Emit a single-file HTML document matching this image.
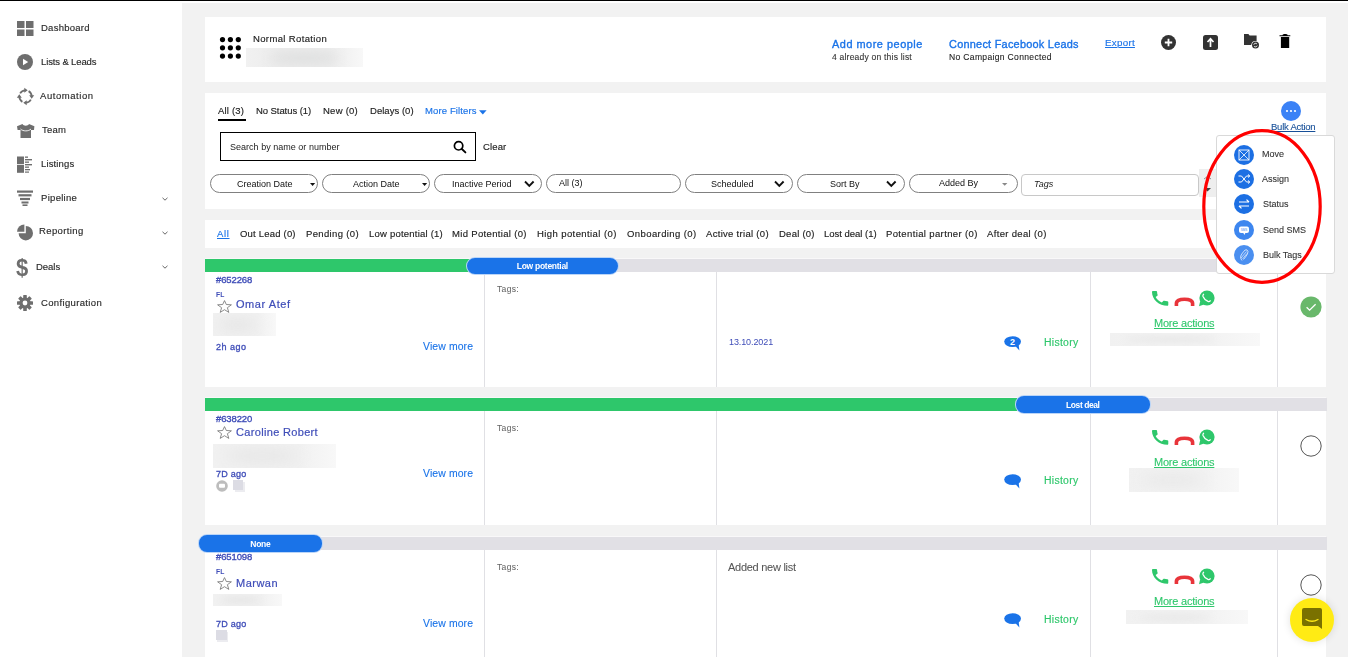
<!DOCTYPE html>
<html><head><meta charset="utf-8">
<style>
*{margin:0;padding:0;box-sizing:border-box}
html,body{width:1348px;height:657px;overflow:hidden;background:#fff;font-family:"Liberation Sans",sans-serif;color:#333}
.a{position:absolute}
.t{position:absolute;line-height:1;white-space:nowrap;will-change:transform}
.ic{position:absolute;overflow:visible}
.pill{position:absolute;top:174px;height:19px;border:1px solid #808080;border-radius:9.5px}
</style></head>
<body>

<div class="a" style="left:0px;top:0px;width:1348px;height:1px;background:#000;"></div>
<div class="a" style="left:182px;top:3px;width:1166px;height:654px;background:#f2f2f2;"></div>
<svg class="ic" style="left:17px;top:20px" width="17" height="17" viewBox="0 0 17 17"><g fill="#6e6e6e"><rect x="0" y="1" width="7.5" height="7"/><rect x="9" y="1" width="7.5" height="7"/><rect x="0" y="9.5" width="7.5" height="6.5"/><rect x="9" y="9.5" width="7.5" height="6.5"/></g></svg>
<div class="t" style="left:41.00px;top:23.00px;font-size:9.5px;color:#2a2a2a;letter-spacing:0.25px;-webkit-text-stroke:0.15px #2a2a2a;">Dashboard</div>
<svg class="ic" style="left:17px;top:54px" width="16" height="16" viewBox="0 0 16 16"><circle cx="8" cy="8" r="8" fill="#6e6e6e"/><path d="M6 4.8 L11.2 8 L6 11.2Z" fill="#fff"/></svg>
<div class="t" style="left:41.00px;top:57.00px;font-size:9.5px;color:#2a2a2a;letter-spacing:-0.13px;-webkit-text-stroke:0.15px #2a2a2a;">Lists &amp; Leads</div>
<svg class="ic" style="left:16.8px;top:87.8px" width="17" height="17" viewBox="0 0 17 17"><g fill="none" stroke="#6e6e6e" stroke-width="1.8"><path d="M3.13 5.40A6.2 6.2 0 0 1 8.18 2.31M11.60 3.13A6.2 6.2 0 0 1 14.69 8.18M13.87 11.60A6.2 6.2 0 0 1 8.82 14.69M5.40 13.87A6.2 6.2 0 0 1 2.31 8.82"/></g><path d="M10.70 2.30L7.30 -0.20L7.30 4.80ZM14.70 10.70L17.20 7.30L12.20 7.30ZM6.30 14.70L9.70 17.20L9.70 12.20ZM2.30 6.30L-0.20 9.70L4.80 9.70Z" fill="#6e6e6e"/></svg>
<div class="t" style="left:40.00px;top:91.00px;font-size:9.5px;color:#2a2a2a;letter-spacing:0.56px;-webkit-text-stroke:0.15px #2a2a2a;">Automation</div>
<svg class="ic" style="left:17px;top:124px" width="18" height="15" viewBox="0 0 18 15"><path d="M5.5 0 L0 2.2 L0.6 6 L3.5 6 L3.5 14 L14 14 L14 6 L17 6 L17.4 2.2 L12 0 C11 2.2 6.5 2.2 5.5 0Z" fill="#6e6e6e"/><path d="M3.5 5 C6 7.5 11.5 7.5 14 5" stroke="#fff" stroke-width="0.9" fill="none"/></svg>
<div class="t" style="left:42.30px;top:125.00px;font-size:9.5px;color:#2a2a2a;letter-spacing:0.19px;-webkit-text-stroke:0.15px #2a2a2a;">Team</div>
<svg class="ic" style="left:17px;top:156px" width="17" height="17" viewBox="0 0 17 17"><g fill="#6e6e6e"><rect x="0" y="0.5" width="7" height="7.5"/><rect x="0" y="8.8" width="7" height="8"/><rect x="8" y="0.5" width="3" height="1.3"/><rect x="8" y="3" width="7" height="1.4"/><rect x="8" y="5.5" width="4" height="1.3"/><rect x="8" y="8" width="7" height="1.4"/><rect x="8" y="10.5" width="4" height="1.3"/><rect x="8" y="13" width="5" height="1.3"/><rect x="8" y="15.5" width="4" height="1.2"/></g></svg>
<div class="t" style="left:41.00px;top:159.00px;font-size:9.5px;color:#2a2a2a;letter-spacing:0.14px;-webkit-text-stroke:0.15px #2a2a2a;">Listings</div>
<svg class="ic" style="left:17px;top:190px" width="16" height="16" viewBox="0 0 16 16"><g fill="#6e6e6e"><rect x="0" y="0.5" width="16" height="2.2"/><rect x="1.5" y="4.2" width="13" height="2.2"/><rect x="3" y="7.9" width="10" height="2.2"/><rect x="4.5" y="11.5" width="7" height="2"/><rect x="5.5" y="14.4" width="5" height="1.6"/></g></svg>
<div class="t" style="left:41.00px;top:193.00px;font-size:9.5px;color:#2a2a2a;letter-spacing:0.30px;-webkit-text-stroke:0.15px #2a2a2a;">Pipeline</div>
<svg class="ic" style="left:162px;top:197px" width="6" height="4" viewBox="0 0 6 4"><path d="M0.5 0.8 L3 3.2 L5.5 0.8" fill="none" stroke="#555" stroke-width="0.9"/></svg>
<svg class="ic" style="left:17px;top:224px" width="17" height="17" viewBox="0 0 17 17"><path d="M8.8 9.2 L8.8 2 A7.2 7.2 0 1 1 1.6 9.2 Z" fill="#6e6e6e"/><path d="M7.4 7.7 L0.1 7.7 A7.3 7.3 0 0 1 7.4 0.4 Z" fill="#6e6e6e"/></svg>
<div class="t" style="left:38.80px;top:226.00px;font-size:9.5px;color:#2a2a2a;letter-spacing:0.39px;-webkit-text-stroke:0.15px #2a2a2a;">Reporting</div>
<svg class="ic" style="left:162px;top:231px" width="6" height="4" viewBox="0 0 6 4"><path d="M0.5 0.8 L3 3.2 L5.5 0.8" fill="none" stroke="#555" stroke-width="0.9"/></svg>
<div class="t" style="left:16.3px;top:255.5px;font-size:22px;font-weight:bold;color:#6e6e6e;line-height:22px;transform:scaleY(1.12);transform-origin:0 0">$</div>
<div class="t" style="left:36.00px;top:262.00px;font-size:9.5px;color:#2a2a2a;letter-spacing:-0.04px;-webkit-text-stroke:0.15px #2a2a2a;">Deals</div>
<svg class="ic" style="left:162px;top:265px" width="6" height="4" viewBox="0 0 6 4"><path d="M0.5 0.8 L3 3.2 L5.5 0.8" fill="none" stroke="#555" stroke-width="0.9"/></svg>
<svg class="ic" style="left:17px;top:295px" width="16" height="16" viewBox="0 0 16 16"><g fill="#6e6e6e" transform="translate(8 8)"><rect x="-1.8" y="-8" width="3.6" height="16" rx="0.6"/><rect x="-1.8" y="-8" width="3.6" height="16" rx="0.6" transform="rotate(45)"/><rect x="-1.8" y="-8" width="3.6" height="16" rx="0.6" transform="rotate(90)"/><rect x="-1.8" y="-8" width="3.6" height="16" rx="0.6" transform="rotate(135)"/><circle r="5.6"/></g><circle cx="8" cy="8" r="2.4" fill="#fff"/></svg>
<div class="t" style="left:41.00px;top:298.00px;font-size:9.5px;color:#2a2a2a;letter-spacing:0.35px;-webkit-text-stroke:0.15px #2a2a2a;">Configuration</div>
<div class="a" style="left:205px;top:17px;width:1121px;height:65px;background:#fff;"></div>
<svg class="ic" style="left:219px;top:36px" width="23" height="24" viewBox="0 0 23 24"><g fill="#000"><circle cx="3.5" cy="3.6" r="2.6"/><circle cx="11.4" cy="3.6" r="2.6"/><circle cx="19.3" cy="3.6" r="2.6"/><circle cx="3.5" cy="11.8" r="2.6"/><circle cx="11.4" cy="11.8" r="2.6"/><circle cx="19.3" cy="11.8" r="2.6"/><circle cx="3.5" cy="20.1" r="2.6"/><circle cx="11.4" cy="20.1" r="2.6"/><circle cx="19.3" cy="20.1" r="2.6"/></g></svg>
<div class="t" style="left:252.50px;top:34.00px;font-size:9.5px;color:#222;letter-spacing:0.36px;-webkit-text-stroke:0.15px #222;">Normal Rotation</div>
<div class="a" style="left:246px;top:48px;width:117px;height:19px;background:linear-gradient(90deg,#f1f1f1,#ececec 30%,#ececec 70%,#f8f8f8);overflow:hidden"><div class="a" style="left:23px;top:5px;width:70px;height:10px;background:#dcdddd;filter:blur(5.7px);border-radius:50%"></div></div>
<div class="t" style="left:832.00px;top:39.00px;font-size:10.92px;color:#1a73e8;letter-spacing:0.52px;-webkit-text-stroke:0.35px #1a73e8;">Add more people</div>
<div class="t" style="left:832.00px;top:53.00px;font-size:8.55px;color:#333;letter-spacing:0.20px;-webkit-text-stroke:0.1px #333;">4 already on this list</div>
<div class="t" style="left:949.40px;top:39.00px;font-size:10.92px;color:#1a73e8;letter-spacing:0.25px;-webkit-text-stroke:0.35px #1a73e8;">Connect Facebook Leads</div>
<div class="t" style="left:949.40px;top:53.00px;font-size:8.55px;color:#222;letter-spacing:0.33px;-webkit-text-stroke:0.1px #222;">No Campaign Connected</div>
<div class="t" style="left:1105.20px;top:38.00px;font-size:9.79px;color:#1a73e8;letter-spacing:0.28px;-webkit-text-stroke:0.15px #1a73e8;text-decoration:underline;">Export</div>
<svg class="ic" style="left:1161px;top:35px" width="15" height="15" viewBox="0 0 15 15"><circle cx="7.5" cy="7.5" r="7.5" fill="#333"/><path d="M7.5 3.8V11.2M3.8 7.5H11.2" stroke="#fff" stroke-width="1.8"/></svg>
<svg class="ic" style="left:1203px;top:35px" width="15" height="15" viewBox="0 0 15 15"><rect x="0" y="0" width="15" height="15" rx="2.5" fill="#333"/><path d="M7.5 12V4.2M4.5 7L7.5 3.8L10.5 7" stroke="#fff" stroke-width="1.7" fill="none"/></svg>
<svg class="ic" style="left:1244px;top:34px" width="16" height="16" viewBox="0 0 16 16"><path d="M0 0H4.4L5.6 1.4H12.6V7.6A4.4 4.4 0 0 0 7.4 10.9H0Z" fill="#333"/><circle cx="11.5" cy="11.1" r="4.1" fill="#fff"/><circle cx="11.5" cy="11.1" r="3.5" fill="#333"/><path d="M9.8 10.6A1.8 1.8 0 0 1 13 10.1M13.2 11.6A1.8 1.8 0 0 1 10 12.1" stroke="#fff" stroke-width="0.9" fill="none"/></svg>
<svg class="ic" style="left:1279px;top:34px" width="12" height="15" viewBox="0 0 12 15"><path d="M3 1.9Q3.6 0 5.2 0H7Q8.6 0 9.2 1.9Z M0.5 1.3H11.3V2.3H0.5Z M1.9 3H10.2V14H1.9Z" fill="#000"/></svg>
<div class="a" style="left:205px;top:93px;width:1121px;height:116px;background:#fff;"></div>
<div class="t" style="left:218.00px;top:106.00px;font-size:9.5px;color:#222;letter-spacing:0.18px;-webkit-text-stroke:0.15px #222;">All (3)</div>
<div class="a" style="left:218px;top:119px;width:28px;height:2px;background:#000;"></div>
<div class="t" style="left:255.90px;top:106.00px;font-size:9.5px;color:#222;letter-spacing:-0.07px;-webkit-text-stroke:0.15px #222;">No Status (1)</div>
<div class="t" style="left:322.60px;top:106.00px;font-size:9.5px;color:#222;letter-spacing:0.25px;-webkit-text-stroke:0.15px #222;">New (0)</div>
<div class="t" style="left:369.90px;top:106.00px;font-size:9.5px;color:#222;letter-spacing:0.03px;-webkit-text-stroke:0.15px #222;">Delays (0)</div>
<div class="t" style="left:425.20px;top:106.00px;font-size:9.5px;color:#1a73e8;letter-spacing:0.12px;-webkit-text-stroke:0.15px #1a73e8;">More Filters</div>
<svg class="ic" style="left:479px;top:110px" width="8" height="5" viewBox="0 0 8 5"><path d="M0 0.2H7.6L3.8 4.4Z" fill="#1a73e8"/></svg>
<div class="a" style="left:220px;top:132px;width:256px;height:29px;border:1.2px solid #000"></div>
<div class="t" style="left:229.50px;top:143.00px;font-size:9.0px;color:#222;letter-spacing:0.02px;">Search by name or number</div>
<svg class="ic" style="left:453px;top:140px" width="14" height="14" viewBox="0 0 14 14"><circle cx="5.6" cy="5.8" r="4.2" fill="none" stroke="#000" stroke-width="1.7"/><path d="M8.6 8.8L12.4 12.4" stroke="#000" stroke-width="1.9" stroke-linecap="round"/></svg>
<div class="t" style="left:483.00px;top:142.00px;font-size:9.5px;color:#222;letter-spacing:0.14px;-webkit-text-stroke:0.15px #222;">Clear</div>
<div class="pill" style="left:210px;width:108px"></div>
<div class="t" style="left:236.60px;top:180.00px;font-size:9.0px;color:#111;">Creation Date</div>
<svg class="ic" style="left:310px;top:182.5px" width="6" height="4" viewBox="0 0 6 4"><path d="M0 0H5.2L2.6 3Z" fill="#111"/></svg>
<div class="pill" style="left:322px;width:108px"></div>
<div class="t" style="left:353.00px;top:180.00px;font-size:9.0px;color:#111;">Action Date</div>
<svg class="ic" style="left:422px;top:182.5px" width="6" height="4" viewBox="0 0 6 4"><path d="M0 0H5.2L2.6 3Z" fill="#111"/></svg>
<div class="pill" style="left:434px;width:108px"></div>
<div class="t" style="left:452.00px;top:180.00px;font-size:9.0px;color:#111;">Inactive Period</div>
<svg class="ic" style="left:524px;top:180px" width="11" height="8" viewBox="0 0 11 8"><path d="M1 1.5L5.3 5.8L9.6 1.5" fill="none" stroke="#111" stroke-width="1.9"/></svg>
<div class="pill" style="left:546px;width:134.5px"></div>
<div class="t" style="left:559.00px;top:179.00px;font-size:9.0px;color:#111;">All (3)</div>
<div class="pill" style="left:685px;width:107.5px"></div>
<div class="t" style="left:710.60px;top:180.00px;font-size:9.0px;color:#111;">Scheduled</div>
<svg class="ic" style="left:774px;top:180px" width="11" height="8" viewBox="0 0 11 8"><path d="M1 1.5L5.3 5.8L9.6 1.5" fill="none" stroke="#111" stroke-width="1.9"/></svg>
<div class="pill" style="left:797px;width:107.5px"></div>
<div class="t" style="left:829.50px;top:180.00px;font-size:9.0px;color:#111;">Sort By</div>
<svg class="ic" style="left:886px;top:180px" width="11" height="8" viewBox="0 0 11 8"><path d="M1 1.5L5.3 5.8L9.6 1.5" fill="none" stroke="#111" stroke-width="1.9"/></svg>
<div class="pill" style="left:909px;width:108.5px"></div>
<div class="t" style="left:939.20px;top:179.00px;font-size:9.0px;color:#111;">Added By</div>
<svg class="ic" style="left:1002px;top:183px" width="6" height="4" viewBox="0 0 6 4"><path d="M0 0H5.4L2.7 2.8Z" fill="#888"/></svg>
<div class="a" style="left:1021px;top:173.5px;width:178px;height:22px;border:1px solid #c8c8c8;border-radius:4px"></div>
<div class="t" style="left:1034.00px;top:180.00px;font-size:9.0px;color:#222;font-style:italic;">Tags</div>
<div class="a" style="left:1199px;top:169px;width:17px;height:28px;background:#eeeeee;"></div>
<svg class="ic" style="left:1203px;top:176px" width="9" height="17" viewBox="0 0 9 17"><path d="M1 3L4.5 0.5L8 3" fill="none" stroke="#777" stroke-width="0.8"/><path d="M1 12L8 12L4.5 15.5Z" fill="#444"/></svg>
<svg class="ic" style="left:1281px;top:101px" width="20" height="20" viewBox="0 0 20 20"><circle cx="10" cy="10" r="10" fill="#3b82f6"/><circle cx="6" cy="10" r="1.1" fill="#fff"/><circle cx="10" cy="10" r="1.1" fill="#fff"/><circle cx="14" cy="10" r="1.1" fill="#fff"/></svg>
<div class="t" style="left:1271.00px;top:122.00px;font-size:9.5px;color:#174f98;letter-spacing:-0.24px;-webkit-text-stroke:0.1px #174f98;text-decoration:underline;">Bulk Action</div>
<div class="a" style="left:205px;top:220px;width:1121px;height:28px;background:#fff;"></div>
<div class="t" style="left:217.00px;top:229.00px;font-size:9.5px;color:#1a73e8;letter-spacing:0.65px;-webkit-text-stroke:0.15px #1a73e8;text-decoration:underline;">All</div>
<div class="t" style="left:240.00px;top:229.00px;font-size:9.5px;color:#222;letter-spacing:0.20px;-webkit-text-stroke:0.15px #222;">Out Lead (0)</div>
<div class="t" style="left:306.00px;top:229.00px;font-size:9.5px;color:#222;letter-spacing:0.35px;-webkit-text-stroke:0.15px #222;">Pending (0)</div>
<div class="t" style="left:368.50px;top:229.00px;font-size:9.5px;color:#222;letter-spacing:0.22px;-webkit-text-stroke:0.15px #222;">Low potential (1)</div>
<div class="t" style="left:452.30px;top:229.00px;font-size:9.5px;color:#222;letter-spacing:0.33px;-webkit-text-stroke:0.15px #222;">Mid Potential (0)</div>
<div class="t" style="left:537.00px;top:229.00px;font-size:9.5px;color:#222;letter-spacing:0.41px;-webkit-text-stroke:0.15px #222;">High potential (0)</div>
<div class="t" style="left:626.60px;top:229.00px;font-size:9.5px;color:#222;letter-spacing:0.41px;-webkit-text-stroke:0.15px #222;">Onboarding (0)</div>
<div class="t" style="left:706.10px;top:229.00px;font-size:9.5px;color:#222;letter-spacing:0.30px;-webkit-text-stroke:0.15px #222;">Active trial (0)</div>
<div class="t" style="left:778.50px;top:229.00px;font-size:9.5px;color:#222;letter-spacing:0.25px;-webkit-text-stroke:0.15px #222;">Deal (0)</div>
<div class="t" style="left:824.00px;top:229.00px;font-size:9.5px;color:#222;letter-spacing:-0.02px;-webkit-text-stroke:0.15px #222;">Lost deal (1)</div>
<div class="t" style="left:886.00px;top:229.00px;font-size:9.5px;color:#222;letter-spacing:0.37px;-webkit-text-stroke:0.15px #222;">Potential partner (0)</div>
<div class="t" style="left:987.40px;top:229.00px;font-size:9.5px;color:#222;letter-spacing:0.34px;-webkit-text-stroke:0.15px #222;">After deal (0)</div>
<div class="a" style="left:205px;top:258px;width:1121px;height:1px;background:#f9f8f9;"></div>
<div class="a" style="left:205px;top:259px;width:1122px;height:13px;background:#e1e0e5;"></div>
<div class="a" style="left:205px;top:259px;width:272px;height:13px;background:#2ec76b;"></div>
<div class="a" style="left:205px;top:272px;width:1121px;height:115px;background:#fff;"></div>
<div class="a" style="left:484px;top:272px;width:1px;height:115px;background:#e0e0e4;"></div>
<div class="a" style="left:716px;top:272px;width:1px;height:115px;background:#e0e0e4;"></div>
<div class="a" style="left:1090px;top:272px;width:1px;height:115px;background:#e0e0e4;"></div>
<div class="a" style="left:1277px;top:272px;width:1px;height:115px;background:#e0e0e4;"></div>
<div class="a" style="left:466px;top:257px;width:153px;height:18px;border-radius:9px;background:#1a73e8;border:1px solid rgba(255,255,255,0.7)"></div>
<div class="t" style="left:467px;width:151px;text-align:center;top:262px;font-size:8.5px;font-weight:bold;color:#fff;letter-spacing:-0.28px;text-indent:-0.28px">Low potential</div>
<div class="t" style="left:215.80px;top:275.00px;font-size:9.5px;color:#3f4db8;letter-spacing:-0.11px;-webkit-text-stroke:0.35px #3f4db8;">#652268</div>
<div class="t" style="left:216.00px;top:292.00px;font-size:6.8px;color:#3f4db8;font-weight:bold;">FL</div>
<svg class="ic" style="left:216.8px;top:300px" width="15" height="13" viewBox="0 0 15 13"><path d="M7.5 0.6 L9.3 4.5 L14.4 4.8 L10.4 7.7 L11.8 12.4 L7.5 9.7 L3.2 12.4 L4.6 7.7 L0.6 4.8 L5.7 4.5Z" fill="none" stroke="#707070" stroke-width="0.8" stroke-linejoin="round"/></svg>
<div class="t" style="left:236.20px;top:299.00px;font-size:11px;color:#3f4db8;letter-spacing:0.56px;-webkit-text-stroke:0.2px #3f4db8;">Omar Atef</div>
<div class="a" style="left:213px;top:313px;width:63px;height:23px;background:linear-gradient(90deg,#f1f1f1,#f1f1f1 30%,#f1f1f1 70%,#f8f8f8);overflow:hidden"><div class="a" style="left:6px;top:6px;width:38px;height:12px;background:#e4e4e4;filter:blur(6.9px);border-radius:50%"></div></div>
<div class="t" style="left:216.00px;top:343.00px;font-size:9.03px;color:#3f4db8;letter-spacing:0.48px;-webkit-text-stroke:0.3px #3f4db8;">2h ago</div>
<div class="t" style="left:423.20px;top:342.00px;font-size:10.45px;color:#1a73e8;letter-spacing:0.11px;-webkit-text-stroke:0.1px #1a73e8;">View more</div>
<div class="t" style="left:496.50px;top:285.00px;font-size:8.55px;color:#666;letter-spacing:0.31px;-webkit-text-stroke:0.05px #666;">Tags:</div>
<div class="t" style="left:728.50px;top:338.00px;font-size:9.0px;color:#3f4db8;letter-spacing:-0.10px;">13.10.2021</div>
<svg class="ic" style="left:1003.5px;top:336px" width="18" height="15" viewBox="0 0 18 15"><ellipse cx="8.6" cy="5.6" rx="8.4" ry="5.4" fill="#1a73e8"/><path d="M10.5 9 L15.4 14.6 L14.6 8.4Z" fill="#1a73e8"/><text x="8.4" y="8.9" font-size="9" font-weight="bold" fill="#fff" text-anchor="middle" font-family="Liberation Sans">2</text></svg>
<div class="t" style="left:1044.40px;top:338.00px;font-size:10.45px;color:#2ec76b;letter-spacing:0.27px;-webkit-text-stroke:0.15px #2ec76b;">History</div>
<svg class="ic" style="left:1152px;top:290px" width="17" height="16" viewBox="0 0 17 16"><path transform="translate(-2.72 -1.35) scale(0.905 0.817)" d="M20.01 15.38c-1.23 0-2.42-.2-3.53-.56-.35-.12-.74-.03-1.01.24l-1.57 1.97c-2.83-1.35-5.48-3.9-6.89-6.83l1.95-1.66c.27-.28.35-.67.24-1.02-.37-1.11-.56-2.3-.56-3.53 0-.54-.45-.99-.99-.99H4.19C3.65 3 3 3.24 3 3.99 3 13.28 10.73 21 20.01 21c.71 0 .99-.63.99-1.18v-3.45c0-.54-.45-.99-.99-.99z" fill="#2ec76b"/></svg>
<svg class="ic" style="left:1173.5px;top:297.5px" width="21" height="9" viewBox="0 0 21 9"><path d="M2.4 8 V5.6 Q2.4 1.3 10.5 1.3 Q18.6 1.3 18.6 5.6 V8" fill="none" stroke="#e8343a" stroke-width="3.6"/></svg>
<svg class="ic" style="left:1197.8px;top:289.5px" width="17" height="17" viewBox="0 0 17 17"><circle cx="9" cy="8" r="7.6" fill="#2ec76b"/><path d="M1 16.2 L2.2 11 L6 14.6Z" fill="#2ec76b"/><path d="M5.6 4.3 Q4.6 5 5 6.4 Q6.4 9.8 10 11.4 Q11.4 11.9 12.2 10.8" fill="none" stroke="#fff" stroke-width="1.3" stroke-linecap="round"/></svg>
<div class="t" style="left:1153.70px;top:318.00px;font-size:11px;color:#2ec76b;letter-spacing:-0.22px;-webkit-text-stroke:0.1px #2ec76b;text-decoration:underline;">More actions</div>
<div class="a" style="left:1110px;top:333px;width:150px;height:13px;background:linear-gradient(90deg,#f1f1f1,#f3f3f3 30%,#f3f3f3 70%,#f8f8f8);overflow:hidden"><div class="a" style="left:15px;top:3px;width:90px;height:6px;background:#e6e6e6;filter:blur(3.9px);border-radius:50%"></div></div>
<svg class="ic" style="left:1299.5px;top:295.5px" width="22" height="22" viewBox="0 0 22 22"><circle cx="11" cy="11" r="10.6" fill="#69b86b"/><path d="M6.6 11.2 L9.6 14.2 L15.6 8.2" fill="none" stroke="#fff" stroke-width="1.3"/></svg>
<svg class="ic" style="left:216px;top:480px" width="12" height="12" viewBox="0 0 12 12"><circle cx="6" cy="6" r="5.8" fill="#bdbdbd"/><rect x="3" y="3.8" width="6" height="4" rx="1" fill="#fff"/></svg>
<div class="a" style="left:235px;top:482px;width:10px;height:10px;background:#ececf0;"></div>
<div class="a" style="left:233px;top:480px;width:10px;height:10px;background:#dcdce4;"></div>
<div class="a" style="left:205px;top:397px;width:1121px;height:1px;background:#f9f8f9;"></div>
<div class="a" style="left:205px;top:398px;width:1122px;height:13px;background:#e1e0e5;"></div>
<div class="a" style="left:205px;top:398px;width:821px;height:13px;background:#2ec76b;"></div>
<div class="a" style="left:205px;top:411px;width:1121px;height:114px;background:#fff;"></div>
<div class="a" style="left:484px;top:411px;width:1px;height:114px;background:#e0e0e4;"></div>
<div class="a" style="left:716px;top:411px;width:1px;height:114px;background:#e0e0e4;"></div>
<div class="a" style="left:1090px;top:411px;width:1px;height:114px;background:#e0e0e4;"></div>
<div class="a" style="left:1277px;top:411px;width:1px;height:114px;background:#e0e0e4;"></div>
<div class="a" style="left:1015px;top:395px;width:136px;height:19px;border-radius:9px;background:#1a73e8;border:1px solid rgba(255,255,255,0.7)"></div>
<div class="t" style="left:1016px;width:134px;text-align:center;top:401px;font-size:8.5px;font-weight:bold;color:#fff;letter-spacing:-0.43px;text-indent:-0.43px">Lost deal</div>
<div class="t" style="left:215.80px;top:414.00px;font-size:9.5px;color:#3f4db8;letter-spacing:-0.11px;-webkit-text-stroke:0.35px #3f4db8;">#638220</div>
<svg class="ic" style="left:216.8px;top:426px" width="15" height="13" viewBox="0 0 15 13"><path d="M7.5 0.6 L9.3 4.5 L14.4 4.8 L10.4 7.7 L11.8 12.4 L7.5 9.7 L3.2 12.4 L4.6 7.7 L0.6 4.8 L5.7 4.5Z" fill="none" stroke="#707070" stroke-width="0.8" stroke-linejoin="round"/></svg>
<div class="t" style="left:236.20px;top:427.00px;font-size:11px;color:#3f4db8;letter-spacing:0.33px;-webkit-text-stroke:0.2px #3f4db8;">Caroline Robert</div>
<div class="a" style="left:213px;top:444px;width:123px;height:24px;background:linear-gradient(90deg,#f1f1f1,#f1f1f1 30%,#f1f1f1 70%,#f8f8f8);overflow:hidden"><div class="a" style="left:12px;top:6px;width:74px;height:12px;background:#e4e4e4;filter:blur(7.2px);border-radius:50%"></div></div>
<div class="t" style="left:216.00px;top:470.00px;font-size:9.03px;color:#3f4db8;letter-spacing:0.23px;-webkit-text-stroke:0.3px #3f4db8;">7D ago</div>
<div class="t" style="left:423.20px;top:469.00px;font-size:10.45px;color:#1a73e8;letter-spacing:0.11px;-webkit-text-stroke:0.1px #1a73e8;">View more</div>
<div class="t" style="left:496.50px;top:424.00px;font-size:8.55px;color:#666;letter-spacing:0.31px;-webkit-text-stroke:0.05px #666;">Tags:</div>
<svg class="ic" style="left:1003.5px;top:474px" width="18" height="15" viewBox="0 0 18 15"><ellipse cx="8.6" cy="5.6" rx="8.4" ry="5.4" fill="#1a73e8"/><path d="M10.5 9 L15.4 14.6 L14.6 8.4Z" fill="#1a73e8"/></svg>
<div class="t" style="left:1044.40px;top:476.00px;font-size:10.45px;color:#2ec76b;letter-spacing:0.27px;-webkit-text-stroke:0.15px #2ec76b;">History</div>
<svg class="ic" style="left:1152px;top:429px" width="17" height="16" viewBox="0 0 17 16"><path transform="translate(-2.72 -1.35) scale(0.905 0.817)" d="M20.01 15.38c-1.23 0-2.42-.2-3.53-.56-.35-.12-.74-.03-1.01.24l-1.57 1.97c-2.83-1.35-5.48-3.9-6.89-6.83l1.95-1.66c.27-.28.35-.67.24-1.02-.37-1.11-.56-2.3-.56-3.53 0-.54-.45-.99-.99-.99H4.19C3.65 3 3 3.24 3 3.99 3 13.28 10.73 21 20.01 21c.71 0 .99-.63.99-1.18v-3.45c0-.54-.45-.99-.99-.99z" fill="#2ec76b"/></svg>
<svg class="ic" style="left:1173.5px;top:436.5px" width="21" height="9" viewBox="0 0 21 9"><path d="M2.4 8 V5.6 Q2.4 1.3 10.5 1.3 Q18.6 1.3 18.6 5.6 V8" fill="none" stroke="#e8343a" stroke-width="3.6"/></svg>
<svg class="ic" style="left:1197.8px;top:428.5px" width="17" height="17" viewBox="0 0 17 17"><circle cx="9" cy="8" r="7.6" fill="#2ec76b"/><path d="M1 16.2 L2.2 11 L6 14.6Z" fill="#2ec76b"/><path d="M5.6 4.3 Q4.6 5 5 6.4 Q6.4 9.8 10 11.4 Q11.4 11.9 12.2 10.8" fill="none" stroke="#fff" stroke-width="1.3" stroke-linecap="round"/></svg>
<div class="t" style="left:1153.70px;top:457.00px;font-size:11px;color:#2ec76b;letter-spacing:-0.22px;-webkit-text-stroke:0.1px #2ec76b;text-decoration:underline;">More actions</div>
<div class="a" style="left:1129px;top:468px;width:110px;height:24px;background:linear-gradient(90deg,#f1f1f1,#f3f3f3 30%,#f3f3f3 70%,#f8f8f8);overflow:hidden"><div class="a" style="left:11px;top:6px;width:66px;height:12px;background:#e6e6e6;filter:blur(7.2px);border-radius:50%"></div></div>
<svg class="ic" style="left:1299.5px;top:434.5px" width="22" height="22" viewBox="0 0 22 22"><circle cx="11" cy="11" r="10.2" fill="#fff" stroke="#555" stroke-width="1"/></svg>
<svg class="ic" style="left:216px;top:480px" width="12" height="12" viewBox="0 0 12 12"><circle cx="6" cy="6" r="5.8" fill="#bdbdbd"/><rect x="3" y="3.8" width="6" height="4" rx="1" fill="#fff"/></svg>
<div class="a" style="left:235px;top:482px;width:10px;height:10px;background:#ececf0;"></div>
<div class="a" style="left:233px;top:480px;width:10px;height:10px;background:#dcdce4;"></div>
<div class="a" style="left:205px;top:536px;width:1121px;height:1px;background:#f9f8f9;"></div>
<div class="a" style="left:205px;top:537px;width:1122px;height:13px;background:#e1e0e5;"></div>
<div class="a" style="left:205px;top:550px;width:1121px;height:120px;background:#fff;"></div>
<div class="a" style="left:484px;top:550px;width:1px;height:120px;background:#e0e0e4;"></div>
<div class="a" style="left:716px;top:550px;width:1px;height:120px;background:#e0e0e4;"></div>
<div class="a" style="left:1090px;top:550px;width:1px;height:120px;background:#e0e0e4;"></div>
<div class="a" style="left:1277px;top:550px;width:1px;height:120px;background:#e0e0e4;"></div>
<div class="a" style="left:198px;top:534px;width:125px;height:19px;border-radius:9px;background:#1a73e8;border:1px solid rgba(255,255,255,0.7)"></div>
<div class="t" style="left:199px;width:123px;text-align:center;top:540px;font-size:8.5px;font-weight:bold;color:#fff;letter-spacing:-0.31px;text-indent:-0.31px">None</div>
<div class="t" style="left:215.80px;top:552.00px;font-size:9.5px;color:#3f4db8;letter-spacing:-0.11px;-webkit-text-stroke:0.35px #3f4db8;">#651098</div>
<div class="t" style="left:216.00px;top:569.00px;font-size:6.8px;color:#3f4db8;font-weight:bold;">FL</div>
<svg class="ic" style="left:216.8px;top:577px" width="15" height="13" viewBox="0 0 15 13"><path d="M7.5 0.6 L9.3 4.5 L14.4 4.8 L10.4 7.7 L11.8 12.4 L7.5 9.7 L3.2 12.4 L4.6 7.7 L0.6 4.8 L5.7 4.5Z" fill="none" stroke="#707070" stroke-width="0.8" stroke-linejoin="round"/></svg>
<div class="t" style="left:236.20px;top:578.00px;font-size:11px;color:#3f4db8;letter-spacing:0.48px;-webkit-text-stroke:0.2px #3f4db8;">Marwan</div>
<div class="a" style="left:213px;top:594px;width:69px;height:12px;background:linear-gradient(90deg,#f1f1f1,#f1f1f1 30%,#f1f1f1 70%,#f8f8f8);overflow:hidden"><div class="a" style="left:7px;top:3px;width:41px;height:6px;background:#e4e4e4;filter:blur(3.6px);border-radius:50%"></div></div>
<div class="t" style="left:216.00px;top:620.00px;font-size:9.03px;color:#3f4db8;letter-spacing:0.23px;-webkit-text-stroke:0.3px #3f4db8;">7D ago</div>
<div class="t" style="left:423.20px;top:619.00px;font-size:10.45px;color:#1a73e8;letter-spacing:0.11px;-webkit-text-stroke:0.1px #1a73e8;">View more</div>
<div class="t" style="left:496.50px;top:563.00px;font-size:8.55px;color:#666;letter-spacing:0.31px;-webkit-text-stroke:0.05px #666;">Tags:</div>
<div class="t" style="left:728.40px;top:562.00px;font-size:11px;color:#555;letter-spacing:-0.27px;-webkit-text-stroke:0.05px #555;">Added new list</div>
<svg class="ic" style="left:1003.5px;top:612.5px" width="18" height="15" viewBox="0 0 18 15"><ellipse cx="8.6" cy="5.6" rx="8.4" ry="5.4" fill="#1a73e8"/><path d="M10.5 9 L15.4 14.6 L14.6 8.4Z" fill="#1a73e8"/></svg>
<div class="t" style="left:1044.40px;top:615.00px;font-size:10.45px;color:#2ec76b;letter-spacing:0.27px;-webkit-text-stroke:0.15px #2ec76b;">History</div>
<svg class="ic" style="left:1152px;top:568px" width="17" height="16" viewBox="0 0 17 16"><path transform="translate(-2.72 -1.35) scale(0.905 0.817)" d="M20.01 15.38c-1.23 0-2.42-.2-3.53-.56-.35-.12-.74-.03-1.01.24l-1.57 1.97c-2.83-1.35-5.48-3.9-6.89-6.83l1.95-1.66c.27-.28.35-.67.24-1.02-.37-1.11-.56-2.3-.56-3.53 0-.54-.45-.99-.99-.99H4.19C3.65 3 3 3.24 3 3.99 3 13.28 10.73 21 20.01 21c.71 0 .99-.63.99-1.18v-3.45c0-.54-.45-.99-.99-.99z" fill="#2ec76b"/></svg>
<svg class="ic" style="left:1173.5px;top:575.5px" width="21" height="9" viewBox="0 0 21 9"><path d="M2.4 8 V5.6 Q2.4 1.3 10.5 1.3 Q18.6 1.3 18.6 5.6 V8" fill="none" stroke="#e8343a" stroke-width="3.6"/></svg>
<svg class="ic" style="left:1197.8px;top:567.5px" width="17" height="17" viewBox="0 0 17 17"><circle cx="9" cy="8" r="7.6" fill="#2ec76b"/><path d="M1 16.2 L2.2 11 L6 14.6Z" fill="#2ec76b"/><path d="M5.6 4.3 Q4.6 5 5 6.4 Q6.4 9.8 10 11.4 Q11.4 11.9 12.2 10.8" fill="none" stroke="#fff" stroke-width="1.3" stroke-linecap="round"/></svg>
<div class="t" style="left:1153.70px;top:596.00px;font-size:11px;color:#2ec76b;letter-spacing:-0.22px;-webkit-text-stroke:0.1px #2ec76b;text-decoration:underline;">More actions</div>
<div class="a" style="left:1126px;top:610px;width:122px;height:14px;background:linear-gradient(90deg,#f1f1f1,#f3f3f3 30%,#f3f3f3 70%,#f8f8f8);overflow:hidden"><div class="a" style="left:12px;top:4px;width:73px;height:7px;background:#e6e6e6;filter:blur(4.2px);border-radius:50%"></div></div>
<svg class="ic" style="left:1299.5px;top:573.5px" width="22" height="22" viewBox="0 0 22 22"><circle cx="11" cy="11" r="10.2" fill="#fff" stroke="#555" stroke-width="1"/></svg>
<div class="a" style="left:217px;top:632px;width:11px;height:10px;background:#ececf0;"></div>
<div class="a" style="left:215.5px;top:630px;width:11px;height:10px;background:#dcdce4;"></div>
<div class="a" style="left:1216px;top:135px;width:119px;height:139px;background:#fff;border:1px solid #d9d9d9;border-radius:3px"></div>
<svg class="ic" style="left:1233.5px;top:144.5px" width="20" height="20" viewBox="0 0 20 20"><circle cx="10" cy="10" r="10" fill="#1c6fe3"/><rect x="5" y="5" width="10" height="10" fill="none" stroke="#fff" stroke-width="0.9"/><path d="M5 5L15 15M15 5L5 15" stroke="#fff" stroke-width="0.8"/></svg>
<div class="t" style="left:1262.00px;top:150.00px;font-size:9px;color:#333;-webkit-text-stroke:0.1px #333;">Move</div>
<svg class="ic" style="left:1233.5px;top:169px" width="20" height="20" viewBox="0 0 20 20"><circle cx="10" cy="10" r="10" fill="#1c6fe3"/><path d="M4.5 7H7.5L12.5 13H15.5M4.5 13H7.5L12.5 7H15.5M14 5.5L15.8 7L14 8.5M14 11.5L15.8 13L14 14.5" fill="none" stroke="#fff" stroke-width="1"/></svg>
<div class="t" style="left:1262.00px;top:175.00px;font-size:9px;color:#333;-webkit-text-stroke:0.1px #333;">Assign</div>
<svg class="ic" style="left:1233.5px;top:194px" width="20" height="20" viewBox="0 0 20 20"><circle cx="10" cy="10" r="10" fill="#1c6fe3"/><path d="M5 8H15M12.5 5.6L15 8M5 12H15M7.5 14.4L5 12" fill="none" stroke="#fff" stroke-width="1.2"/></svg>
<div class="t" style="left:1262.50px;top:200.00px;font-size:9px;color:#333;-webkit-text-stroke:0.1px #333;">Status</div>
<svg class="ic" style="left:1233.5px;top:220px" width="20" height="20" viewBox="0 0 20 20"><circle cx="10" cy="10" r="10" fill="#3d86ef"/><rect x="5" y="6.5" width="10" height="6.5" rx="2" fill="#fff"/><path d="M9 12.5L10.5 15L11.5 12.5Z" fill="#fff"/><text x="10" y="11" font-size="3" fill="#3d86ef" text-anchor="middle" font-family="Liberation Sans">SMS</text></svg>
<div class="t" style="left:1262.50px;top:226.00px;font-size:9px;color:#333;-webkit-text-stroke:0.1px #333;">Send SMS</div>
<svg class="ic" style="left:1233.5px;top:245.2px" width="20" height="20" viewBox="0 0 20 20"><circle cx="10" cy="10" r="10" fill="#4a8ff0"/><path d="M8 15.5 Q5 12 8.5 8 L11 5 Q13.5 4 14 6.5 Q14 9 11.5 12 L9.5 14.5" fill="none" stroke="#fff" stroke-width="0.7"/><path d="M7 13 L12.5 6.5 M8.5 14 L13 8.5" stroke="#fff" stroke-width="0.6"/></svg>
<div class="t" style="left:1262.50px;top:251.00px;font-size:9px;color:#333;-webkit-text-stroke:0.1px #333;">Bulk Tags</div>
<svg class="ic" style="left:1200px;top:126px" width="124" height="162" viewBox="0 0 124 162"><ellipse cx="62" cy="80.5" rx="58.2" ry="75.8" fill="none" stroke="#ff0000" stroke-width="3.2"/></svg>
<div class="a" style="left:1289.5px;top:598px;width:44px;height:44px;border-radius:50%;background:#ffeb14;box-shadow:0 0 8px rgba(0,0,0,0.12)"></div>
<svg class="ic" style="left:1300.5px;top:607px" width="22" height="24" viewBox="0 0 22 24"><path d="M3 1H19Q21 1 21 3V22L17 19H3Q1 19 1 17V3Q1 1 3 1Z" fill="#7a7100"/><path d="M5 12.5Q11 16 17 12.5" fill="none" stroke="#ffeb14" stroke-width="1.3" stroke-linecap="round"/></svg>
</body></html>
